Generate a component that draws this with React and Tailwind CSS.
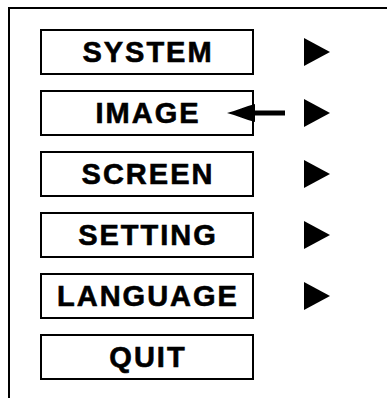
const items = [
  { label: 'SYSTEM', arrow: true },
  { label: 'IMAGE', arrow: true, pointer: true },
  { label: 'SCREEN', arrow: true },
  { label: 'SETTING', arrow: true },
  { label: 'LANGUAGE', arrow: true },
  { label: 'QUIT', arrow: false },
];

const Triangle = () => (
  <svg width="26" height="28" viewBox="0 0 26 28" className="block">
    <polygon points="0,0 26,14 0,28" fill="#000" />
  </svg>
);

// left-pointing marker that sits over the IMAGE box edge
const Pointer = () => (
  <svg
    width="60"
    height="18"
    viewBox="0 0 60 18"
    className="absolute left-[185px] top-[12px]"
  >
    <path d="M0,9 C9,7 19,2 28,0 L28,6.5 L58,6.5 L58,11.5 L28,11.5 L28,18 C19,16 9,11 0,9 Z" fill="#000" />
  </svg>
);

export default function App() {
  return (
    <div
      className="w-[387px] h-[398px] bg-white pt-[7px] pl-[8px] overflow-hidden"
      style={{ fontFamily: '"Liberation Sans", Arial, sans-serif' }}
    >
      <div className="h-full border-t-[2px] border-l-[2px] border-black pl-[30px] pt-[20px]">
        <div className="flex flex-col gap-[15px]">
          {items.map((item) => (
            <div key={item.label} className="flex items-center">
              <div className="relative w-[214px] h-[46px] border-2 border-black flex items-center justify-center">
                <span className="text-[29px] font-bold tracking-[2px] leading-none text-black pl-[2px] [-webkit-text-stroke:0.6px_black]">
                  {item.label}
                </span>
                {item.pointer && <Pointer />}
              </div>
              {item.arrow && (
                <div className="ml-[50px]">
                  <Triangle />
                </div>
              )}
            </div>
          ))}
        </div>
      </div>
    </div>
  );
}
